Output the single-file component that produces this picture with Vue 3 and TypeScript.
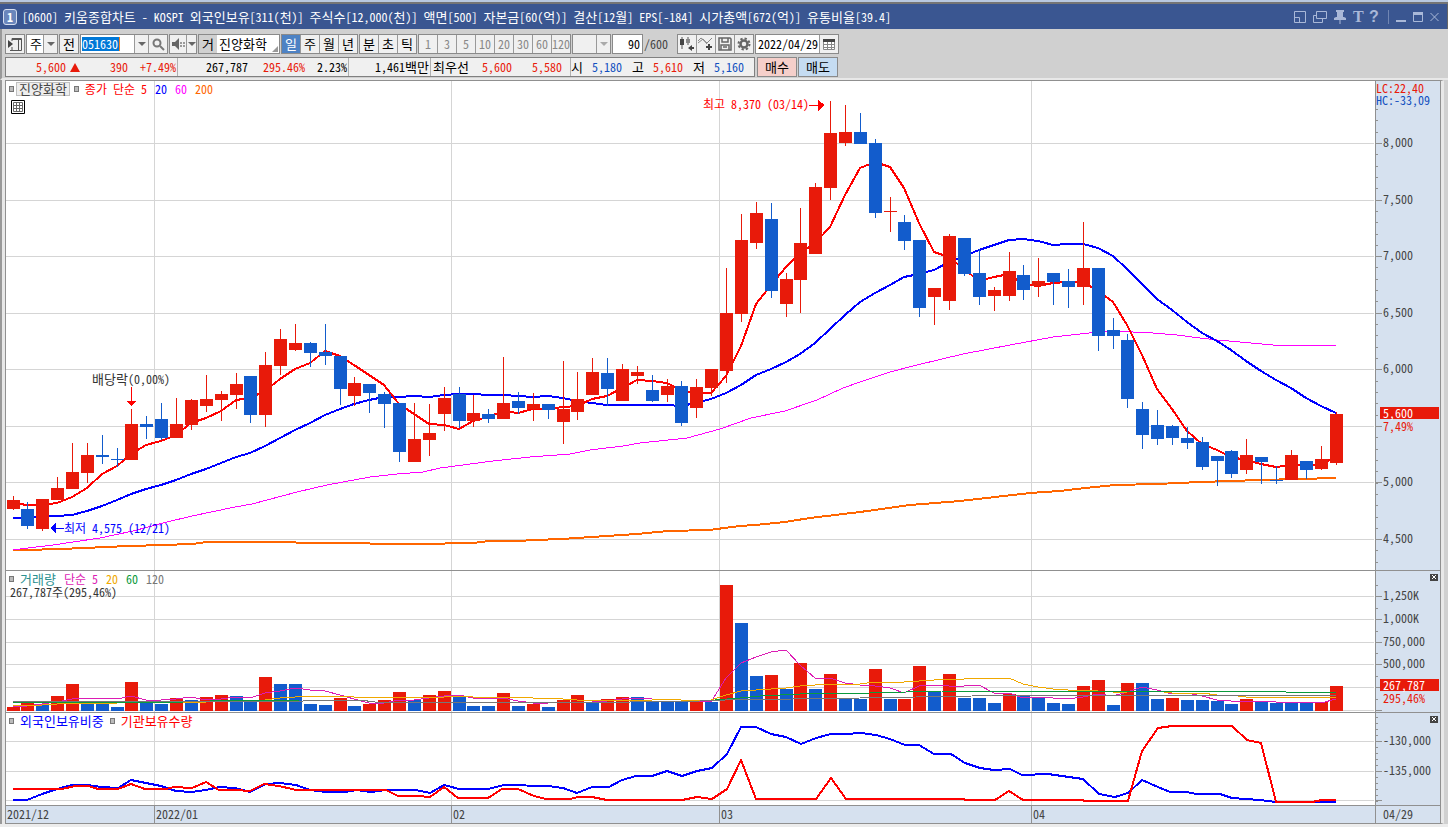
<script setup lang="ts">
type Tone = 'R' | 'B'
type Candle = [Tone, number, number, number, number]
type Point = [number, number]

// tone, body top, body bottom, high, low
const candles: Candle[] = [
  ['R', 500, 509, 496, 510], ['B', 509, 526, 502, 529], ['R', 499, 529, 499, 531], ['R', 488, 500, 477, 500],
  ['R', 472, 489, 443, 489], ['R', 455, 473, 443, 483], ['B', 455, 457, 435, 464], ['B', 459, 460, 448, 467],
  ['R', 424, 460, 409, 460], ['B', 424, 427, 416, 439], ['B', 419, 438, 403, 440], ['R', 424, 438, 398, 438],
  ['R', 400, 425, 399, 430], ['R', 399, 406, 375, 412], ['R', 394, 400, 391, 421], ['R', 384, 395, 373, 409],
  ['B', 376, 415, 376, 423], ['R', 365, 415, 352, 427], ['R', 339, 366, 329, 375], ['R', 343, 350, 324, 351],
  ['B', 343, 353, 342, 367], ['B', 352, 356, 324, 365], ['B', 356, 389, 356, 405], ['R', 383, 396, 377, 406],
  ['B', 384, 393, 384, 413], ['B', 394, 404, 392, 428], ['B', 403, 452, 403, 462], ['R', 439, 462, 403, 462],
  ['R', 433, 440, 404, 456], ['R', 398, 414, 387, 431], ['B', 394, 421, 387, 428], ['R', 413, 421, 395, 427],
  ['B', 414, 419, 409, 423], ['R', 403, 419, 357, 419], ['B', 401, 408, 392, 414], ['R', 404, 409, 393, 421],
  ['B', 404, 410, 404, 419], ['R', 409, 422, 361, 444], ['R', 399, 412, 372, 420], ['R', 372, 395, 358, 395],
  ['B', 373, 389, 358, 406], ['R', 369, 401, 364, 401], ['R', 372, 376, 366, 384], ['B', 390, 401, 375, 402],
  ['R', 386, 395, 379, 402], ['B', 386, 423, 381, 426], ['R', 387, 408, 379, 418], ['R', 369, 388, 369, 396],
  ['R', 313, 371, 268, 383], ['R', 240, 314, 214, 322], ['R', 213, 243, 202, 249], ['B', 219, 291, 203, 298],
  ['R', 279, 304, 273, 317], ['R', 243, 280, 208, 313], ['R', 187, 254, 183, 254], ['R', 133, 188, 101, 200],
  ['R', 132, 143, 105, 146], ['B', 132, 144, 113, 144], ['B', 143, 213, 139, 218], ['R', 211, 212, 197, 232],
  ['B', 222, 241, 215, 250], ['B', 240, 308, 240, 317], ['R', 288, 297, 288, 325], ['R', 236, 301, 234, 310],
  ['B', 238, 274, 238, 276], ['B', 273, 297, 249, 305], ['R', 290, 296, 287, 311], ['R', 271, 296, 252, 301],
  ['B', 275, 290, 265, 300], ['R', 281, 286, 258, 297], ['B', 273, 282, 273, 305], ['B', 281, 287, 269, 308],
  ['R', 268, 287, 222, 305], ['B', 268, 336, 268, 351], ['B', 330, 336, 318, 349], ['B', 340, 399, 334, 408],
  ['B', 409, 435, 402, 449], ['B', 425, 439, 410, 445], ['B', 426, 438, 425, 445], ['B', 438, 443, 427, 449],
  ['B', 442, 467, 437, 470], ['B', 456, 461, 456, 486], ['B', 451, 474, 450, 478], ['R', 455, 470, 439, 474],
  ['B', 457, 462, 457, 484], ['B', 480, 481, 466, 484], ['R', 455, 480, 450, 480], ['B', 461, 470, 461, 479],
  ['R', 459, 469, 446, 470], ['R', 414, 463, 412, 465],
]

const volumeTones = 'RRBRRBBBRBBRBRRBBRBBBBRBRRRBRRBBBRBRBRRBRRBBBBRBRBBRBRBRBBRBRRBRBBBRBBBBRRBRBBRBBBBRBBBBRR'
const volumes: number[] = [
  707, 703, 704, 696, 684, 704, 704, 707, 682, 703, 704, 698, 700, 697, 695, 696, 701, 677, 684, 684,
  704, 705, 698, 706, 704, 700, 692, 700, 695, 691, 696, 706, 706, 693, 706, 704, 707, 700, 695, 702,
  699, 697, 697, 701, 702, 702, 701, 702, 585, 623, 676, 675, 689, 663, 689, 674, 699, 699, 669, 699,
  699, 666, 691, 674, 698, 698, 703, 694, 695, 697, 703, 704, 686, 680, 705, 683, 683, 699, 698, 700,
  700, 701, 704, 699, 702, 703, 703, 703, 702, 686,
]

const foreignPoints: Point[] = [
  [13, 800], [27, 800], [42, 794], [57, 789], [72, 785], [87, 785], [102, 787], [118, 788], [131, 780],
  [146, 783], [161, 786], [176, 791], [191, 792], [206, 790], [219, 787], [235, 788], [250, 792], [266, 784],
  [280, 783], [296, 785], [310, 790], [326, 792], [345, 792], [357, 790], [371, 792], [386, 790], [416, 790],
  [430, 793], [444, 785], [459, 789], [488, 789], [504, 785], [548, 786], [563, 788], [577, 793], [592, 787],
  [609, 787], [622, 780], [636, 776], [652, 776], [667, 771], [682, 776], [697, 771], [712, 768], [727, 754],
  [741, 727], [756, 727], [771, 734], [786, 737], [801, 744], [816, 738], [831, 734], [846, 734], [861, 733],
  [876, 735], [890, 739], [905, 745], [919, 745], [934, 754], [951, 754], [965, 763], [980, 768], [994, 770],
  [1010, 769], [1022, 775], [1048, 774], [1083, 779], [1099, 794], [1115, 797], [1128, 793], [1142, 780],
  [1158, 787], [1170, 792], [1187, 792], [1196, 794], [1220, 794], [1232, 798], [1260, 800], [1276, 802],
  [1336, 802],
]
const institutionPoints: Point[] = [
  [13, 789], [62, 789], [75, 786], [88, 786], [98, 789], [118, 789], [131, 784], [145, 789], [166, 789],
  [174, 787], [192, 788], [206, 782], [219, 790], [235, 790], [250, 791], [264, 784], [279, 786], [296, 790],
  [386, 790], [398, 796], [418, 796], [430, 797], [444, 787], [458, 798], [488, 798], [502, 789], [518, 789],
  [534, 796], [546, 799], [570, 799], [578, 797], [592, 797], [607, 800], [682, 800], [697, 797], [712, 799],
  [727, 789], [741, 760], [756, 799], [816, 799], [831, 778], [846, 799], [964, 799], [965, 800], [995, 800],
  [1009, 791], [1023, 800], [1083, 800], [1084, 801], [1128, 801], [1142, 751], [1158, 728], [1172, 726],
  [1232, 726], [1247, 740], [1261, 743], [1276, 802], [1312, 802], [1322, 800], [1336, 800],
]

const xAt = (i: number): number => Math.floor(13.05 + i * 14.865)
const tint = (tone: string): string => (tone === 'R' ? '#e81a0a' : '#125ccc')
const toPath = (points: Point[]): string => points.map(([x, y]) => `${x},${y}`).join(' ')

function average(values: number[], span: number, seed: number[]): Point[] {
  return values.map((_, i): Point => {
    if (i < seed.length) return [xAt(i), seed[i]]
    const part = values.slice(Math.max(0, i - span + 1), i + 1)
    return [xAt(i), Math.round(part.reduce((a, b) => a + b, 0) / part.length)]
  })
}

const closes = candles.map(([tone, top, bottom]) => (tone === 'R' ? top : bottom))
const ma5 = average(closes, 5, [503, 505, 505, 503])
const ma20 = average(closes, 20, [518, 518, 517, 516, 515, 511, 506, 500, 494, 489, 485, 480, 474, 469, 463, 457, 453, 446, 438])
const ma60: Point[] = [
  [13, 550], [28, 548], [53, 545], [100, 538], [133, 531], [163, 523], [192, 516], [235, 507], [252, 504], [297, 492],
  [327, 485], [370, 477], [397, 474], [423, 472], [440, 468], [463, 465], [493, 461], [530, 457], [570, 454], [590, 450],
  [623, 446], [640, 443], [687, 438], [720, 429], [751, 418], [785, 411], [817, 400], [843, 388], [860, 382], [890, 372],
  [917, 365], [963, 354], [1010, 345], [1053, 337], [1080, 334], [1107, 331], [1133, 332], [1153, 333], [1177, 335],
  [1200, 338], [1217, 340], [1240, 342], [1273, 345], [1313, 345], [1336, 346],
]
const ma200: Point[] = [
  [13, 550], [28, 550], [57, 549], [88, 548], [103, 547], [131, 546], [162, 545], [192, 544], [207, 542], [295, 542],
  [297, 543], [369, 543], [371, 544], [444, 544], [446, 543], [473, 543], [489, 541], [518, 541], [535, 540], [562, 539],
  [592, 537], [637, 534], [668, 531], [710, 530], [724, 528], [740, 526], [755, 525], [785, 522], [810, 518], [860, 512],
  [910, 505], [960, 501], [1030, 493], [1060, 491], [1085, 488], [1115, 485], [1157, 484], [1200, 482], [1260, 480], [1336, 478],
]
const volMa5 = average(volumes, 5, [706, 706, 704, 702])
const volMa20 = average(volumes, 20, [705, 705, 705, 704, 703, 703, 703, 703, 702, 702, 702, 702, 702, 702, 701, 701, 701, 700, 698])
const volMa60: Point[] = [
  [13, 702], [183, 702], [210, 701], [300, 700], [715, 700], [740, 698], [760, 696], [800, 694], [870, 693], [942, 691],
  [1284, 691], [1286, 692], [1336, 692],
]
const volMa120: Point[] = [
  [13, 701], [303, 701], [310, 700], [360, 700], [375, 702], [630, 702], [700, 701], [725, 700], [860, 698], [972, 696],
  [1134, 695], [1336, 696],
]

const months = [154, 451, 719, 1031]
const priceGrid = [143, 200, 256, 313, 369, 426, 482, 539]
const volumeGrid = [596, 619, 642, 664, 687, 710]
const holdingGrid = [741, 771, 800]

const steps = (from: number, to: number, step: number): number[] => {
  const out: number[] = []
  for (let y = from; y <= to; y += step) out.push(Math.round(y))
  return out
}
const priceTicks = steps(109, 566, 11.32)
const volumeTicks = steps(585, 700, 22.8)
const holdingTicks = steps(717, 803, 6)

const priceLabels = [
  { y: 142, t: '8,000' }, { y: 199, t: '7,500' }, { y: 255, t: '7,000' }, { y: 312, t: '6,500' },
  { y: 368, t: '6,000' }, { y: 481, t: '5,000' }, { y: 538, t: '4,500' },
]
const volumeLabels = [{ y: 595, t: '1,250K' }, { y: 618, t: '1,000K' }, { y: 641, t: '750,000' }, { y: 663, t: '500,000' }]
const holdingLabels = [{ y: 740, t: '-130,000' }, { y: 770, t: '-135,000' }]

const inMain = (y: number): string => `${((y - 81) / 489) * 100}%`
const inVolume = (y: number): string => `${((y - 571) / 141) * 100}%`
const inHolding = (y: number): string => `${((y - 713) / 92) * 100}%`
const across = (x: number): string => `${((x - 6) / 1369) * 100}%`

const dateLabels = [
  { x: 154, t: '2022/01' }, { x: 451, t: '02' }, { x: 719, t: '03' }, { x: 1031, t: '04' },
]
const periods = ['일', '주', '월', '년']
const units = ['분', '초', '틱']
const spans = ['1', '3', '5', '10', '20', '30', '60', '120']

const title = '[0600] 키움종합차트 - KOSPI 외국인보유[311(천)] 주식수[12,000(천)] 액면[500] 자본금[60(억)] 결산[12월] EPS[-184] 시가총액[672(억)] 유통비율[39.4]'
// Hangul runs are set one size up from the half-width Latin beside them
const titleRuns = title.split(/([가-힣]+)/).map((text) => ({ text, hangul: /[가-힣]/.test(text) }))
</script>

<template>
  <main class="window">
    <div class="tabs"></div>
    <header class="title">
      <span class="badge">1</span>
      <h1><span v-for="(r, i) in titleRuns" :key="i" :class="{ ko: r.hangul }">{{ r.text }}</span></h1>
      <div class="tools">
        <button aria-label="화면 축소"><svg width="12" height="12" viewBox="0 0 12 12"><path d="M.5.5h11v11H.5zM.5 6.5h5v5" /></svg></button>
        <button aria-label="화면 복제"><svg width="14" height="12" viewBox="0 0 14 12"><path d="M3.500.5h10v7h-10zM3 4.500H.5v7h9V8" /></svg></button>
        <button aria-label="고정"><svg width="12" height="14" viewBox="0 0 12 14"><path class="solid" d="M2 0h8v2H9v5h1l2 1v2H0V8l2-1h1V2H2zM5.500 10h1v4h-1z" /></svg></button>
        <button class="glyph serif" aria-label="글꼴">T</button>
        <button class="glyph" aria-label="도움말">?</button>
        <i></i>
        <button aria-label="최소화"><svg width="10" height="12" viewBox="0 0 10 12"><path class="solid" d="M0 9h10v2H0z" /></svg></button>
        <button aria-label="최대화"><svg width="10" height="12" viewBox="0 0 10 12"><path d="M.5 1.500h9v9h-9z" /><path class="solid" d="M0 1h10v3H0z" /></svg></button>
        <button aria-label="닫기"><svg width="9" height="12" viewBox="0 0 9 12"><path d="M.5 2l8 8M8.500 2l-8 8" /></svg></button>
      </div>
    </header>

    <section class="controls">
      <div class="bar">
        <button class="box square" aria-label="패널"><svg width="14" height="14" viewBox="0 0 14 14"><path d="M4 4V1.500h9.500v12H4V10M4 2.500h9M10.500 3v10M2 13.500h3" fill="none" stroke="#555" /><path d="M0 3l5 4-5 4z" fill="#444" /></svg></button>
        <div class="box combo kind">
          <select class="ko" aria-label="종목 구분"><option>주</option></select>
          <span class="arrow"></span>
        </div>
        <button class="box square ko">전</button>
        <div class="box combo code">
          <span class="field"><input type="text" value="051630" aria-label="종목코드" /></span>
          <button class="arrow" aria-label="종목 목록"></button>
          <button class="cell" aria-label="종목 검색"><svg width="13" height="13" viewBox="0 0 13 13"><circle cx="5" cy="5" r="3.500" fill="none" stroke="#777" stroke-width="2" /><path d="M8 8l4 4" stroke="#777" stroke-width="2" /></svg></button>
        </div>
        <div class="box combo sound">
          <button class="cell" aria-label="소리"><svg width="13" height="12" viewBox="0 0 13 12"><path d="M0 4h3l4-4v12L3 8H0z" fill="#666" /><path d="M8 4h2v2H8zM11 4h2v2h-2zM8 7h2v2H8zM11 7h2v2h-2z" fill="#999" /></svg></button>
          <button class="arrow" aria-label="소리 설정"></button>
        </div>
        <div class="box combo name">
          <span class="mark ko">거</span>
          <select class="ko" aria-label="종목명"><option>진양화학</option></select>
        </div>
        <div class="group four ko">
          <button v-for="(p, i) in periods" :key="p" :class="{ on: i === 0 }">{{ p }}</button>
        </div>
        <div class="group three ko">
          <button v-for="u in units" :key="u">{{ u }}</button>
        </div>
        <div class="group faint">
          <button v-for="s in spans" :key="s">{{ s }}</button>
        </div>
        <div class="box combo blank">
          <select aria-label="사용자 주기" disabled><option></option></select>
          <span class="arrow pale"></span>
        </div>
        <input class="box bars" type="text" value="90" aria-label="봉 개수" />
        <span class="total">/600</span>
        <div class="group four">
          <button aria-label="차트 유형 추가"><svg width="16" height="16" viewBox="0 0 16 16"><path d="M3 1v12M9 1v8" stroke="#555" /><path d="M1 3h4v6H1z" fill="#444" /><path d="M7 3h4v4H7z" fill="#888" /><path d="M9 12l4-3v2h2v2h-2v2z" fill="#444" /></svg></button>
          <button aria-label="지표 추가"><svg width="16" height="16" viewBox="0 0 16 16"><path d="M0 5l3-3 6 5 5-5M0 7l5-4 4 5" stroke="#888" fill="none" /><path d="M11 8v6M8 11h6" stroke="#444" stroke-width="2" /></svg></button>
          <button aria-label="저장"><svg width="14" height="14" viewBox="0 0 14 14"><path d="M1 1h11l1 1v11H1zM4 1v4h6V1M3 13V8h8v5M5 10h4" stroke="#666" stroke-width="1.500" fill="none" /></svg></button>
          <button aria-label="설정"><svg width="14" height="14" viewBox="0 0 14 14"><circle cx="7" cy="7" r="5.500" fill="none" stroke="#666" stroke-width="2" stroke-dasharray="2.300 2" /><circle cx="7" cy="7" r="3.500" fill="none" stroke="#666" stroke-width="2.500" /></svg></button>
        </div>
        <div class="box combo date">
          <input type="text" value="2022/04/29" aria-label="기준일" />
          <button class="cell" aria-label="달력"><svg width="12" height="11" viewBox="0 0 12 11"><path d="M.5.5h11v10H.5zM0 5.500h12M0 8.500h12M4.500 3v8M8.500 3v8" stroke="#888" fill="#fff" /><path d="M0 0h12v3H0z" fill="#444" /></svg></button>
        </div>
      </div>

      <div class="bar quotes">
        <dl class="info">
          <div class="s1 up"><dd>5,600</dd><dd class="tri"></dd><dd>390</dd><dd>+7.49%</dd></div>
          <div class="s2"><dd>267,787</dd><dd class="up">295.46%</dd><dd>2.23%</dd></div>
          <div class="s3"><dd>1,461<span class="ko">백만</span></dd></div>
          <div class="s4"><dt class="ko">최우선</dt><dd class="up">5,600</dd><dd class="up">5,580</dd></div>
          <div class="s5"><dt class="ko">시</dt><dd class="down">5,180</dd><dt class="ko">고</dt><dd class="up">5,610</dd><dt class="ko">저</dt><dd class="down">5,160</dd></div>
        </dl>
        <button class="box order buy ko">매수</button>
        <button class="box order sell ko">매도</button>
      </div>
    </section>

    <section class="chart">
      <div class="plot">
        <svg viewBox="6 81 1369 489" preserveAspectRatio="none">
          <g class="grid">
            <rect v-for="x in months" :key="x" :x="x" y="81" width="1" height="489" />
            <rect v-for="y in priceGrid" :key="y" x="6" :y="y" width="1368" height="1" />
          </g>
          <g class="lines">
            <polyline :points="toPath(ma200)" stroke="#f60" stroke-width="2" />
            <polyline :points="toPath(ma60)" stroke="#f0f" />
            <polyline :points="toPath(ma20)" stroke="#00f" stroke-width="2" />
            <polyline :points="toPath(ma5)" stroke="#f00" stroke-width="2" />
          </g>
          <g v-for="(c, i) in candles" :key="i" :fill="tint(c[0])">
            <rect :x="xAt(i)" :y="c[3]" width="1" :height="Math.max(1, c[4] - c[3])" />
            <rect :x="xAt(i) - 6" :y="c[1]" width="13" :height="c[2] - c[1]" />
          </g>
          <path d="M131 387h1v14h4l-5 5-5-5h5z" fill="#f00" />
          <path d="M50 528l6-5v5h8v1h-8v5z" fill="#00f" />
          <path d="M809 105h9v-5l7 5-7 6v-5h-9z" fill="#f00" />
        </svg>
        <div class="legend">
          <i class="dot"></i><button class="stock ko">진양화학</button><i class="dot"></i>
          <span class="red gap">종가 단순 5</span><span class="blue">20</span><span class="pink">60</span><span class="orange">200</span>
        </div>
        <button class="sheet" aria-label="데이터 표"><svg width="14" height="14" viewBox="0 0 14 14"><path d="M.5.500h13v13H.5z" fill="#fff" stroke="#000" /><path d="M2.500 2.500h9v9h-9zM2 5.500h10M2 8.500h10M5.500 2v10M8.500 2v10" fill="none" stroke="#666" /></svg></button>
        <span class="note dark" :style="{ left: across(92), top: inMain(379) }"><span class="ko">배당락</span>(0,00%)</span>
        <span class="note blue" :style="{ left: across(64), top: inMain(528) }">최저 4,575 (12/21)</span>
        <span class="note red" :style="{ left: across(703), top: inMain(104) }">최고 8,370 (03/14)</span>
      </div>
      <div class="axis">
        <svg viewBox="1376 81 64 489" preserveAspectRatio="none">
          <g class="ticks">
            <rect v-for="y in priceTicks" :key="y" x="1376" :y="y" width="2" height="1" />
            <rect v-for="y in priceGrid" :key="'m' + y" x="1376" :y="y" width="6" height="1" />
          </g>
        </svg>
        <span class="bound up" :style="{ top: inMain(88) }">LC:22,40</span>
        <span class="bound down" :style="{ top: inMain(100) }">HC:-33,09</span>
        <span v-for="l in priceLabels" :key="l.t" class="level" :style="{ top: inMain(l.y) }">{{ l.t }}</span>
        <span class="level up" :style="{ top: inMain(426) }">7,49%</span>
        <strong :style="{ top: inMain(413) }">5,600</strong>
      </div>

      <div class="plot">
        <svg viewBox="6 571 1369 141" preserveAspectRatio="none">
          <g class="grid">
            <rect v-for="x in months" :key="x" :x="x" y="571" width="1" height="141" />
            <rect v-for="y in volumeGrid" :key="y" x="6" :y="y" width="1368" height="1" />
          </g>
          <rect v-for="(v, i) in volumes" :key="i" :x="xAt(i) - 6" :y="v" width="13" :height="711 - v" :fill="tint(volumeTones[i])" />
          <g class="lines">
            <polyline :points="toPath(volMa5)" stroke="#dc1cb4" />
            <polyline :points="toPath(volMa20)" stroke="#f0a800" />
            <polyline :points="toPath(volMa60)" stroke="#0a9a3c" />
            <polyline :points="toPath(volMa120)" stroke="#777" />
          </g>
        </svg>
        <div class="legend low">
          <i class="dot"></i><span class="teal first ko">거래량</span><span class="magenta">단순 5</span><span class="amber">20</span><span class="green">60</span><span class="grey">120</span>
        </div>
        <span class="volume-now">267,787주(295,46%)</span>
      </div>
      <div class="axis">
        <svg viewBox="1376 571 64 141" preserveAspectRatio="none">
          <g class="ticks">
            <rect v-for="y in volumeTicks" :key="y" x="1376" :y="y" width="2" height="1" />
            <rect v-for="y in volumeGrid" :key="'m' + y" x="1376" :y="y" width="6" height="1" />
          </g>
        </svg>
        <span v-for="l in volumeLabels" :key="l.t" class="level" :style="{ top: inVolume(l.y) }">{{ l.t }}</span>
        <span class="level up" :style="{ top: inVolume(698) }">295,46%</span>
        <strong :style="{ top: inVolume(685) }">267,787</strong>
        <button class="shut" aria-label="거래량 닫기"><svg width="8" height="7" viewBox="0 0 8 7"><path d="M2 1l4 4M6 1L2 5" stroke="#fff" /></svg></button>
      </div>

      <div class="plot">
        <svg viewBox="6 713 1369 92" preserveAspectRatio="none">
          <g class="grid">
            <rect v-for="x in months" :key="x" :x="x" y="713" width="1" height="92" />
            <rect v-for="y in holdingGrid" :key="y" x="6" :y="y" width="1368" height="1" />
          </g>
          <g class="lines">
            <polyline :points="toPath(foreignPoints)" stroke="#00f" stroke-width="2" />
            <polyline :points="toPath(institutionPoints)" stroke="#f00" stroke-width="2" />
          </g>
        </svg>
        <div class="legend low holding ko">
          <i class="dot"></i><span class="blue">외국인보유비중</span><i class="dot"></i><span class="red">기관보유수량</span>
        </div>
      </div>
      <div class="axis">
        <svg viewBox="1376 713 64 92" preserveAspectRatio="none">
          <g class="ticks">
            <rect v-for="y in holdingTicks" :key="y" x="1376" :y="y" width="2" height="1" />
            <rect v-for="y in holdingGrid" :key="'m' + y" x="1376" :y="y" width="6" height="1" />
          </g>
        </svg>
        <span v-for="l in holdingLabels" :key="l.t" class="level" :style="{ top: inHolding(l.y) }">{{ l.t }}</span>
        <button class="shut" aria-label="보유 지표 닫기"><svg width="8" height="7" viewBox="0 0 8 7"><path d="M2 1l4 4M6 1L2 5" stroke="#fff" /></svg></button>
      </div>

      <div class="dates">
        <span>2021/12</span>
        <span v-for="d in dateLabels" :key="d.t" class="month" :style="{ left: across(d.x) }">{{ d.t }}</span>
      </div>
      <div class="today">04/29</div>
    </section>
    <footer></footer>
  </main>
</template>

<style>
html,
body {
  margin: 0;
  background: #d0d0d0;
}
</style>

<style scoped>
* {
  box-sizing: border-box;
}
.window {
  display: grid;
  grid-template-rows: 4px 25px 51px minmax(600px, 1fr) 3px;
  height: 100vh;
  min-height: 683px;
  min-width: 900px;
  overflow: hidden;
  background: #d0d0d0;
  color: #000;
  font: 12px/18px "Noto Sans Mono CJK KR", "Noto Sans CJK KR", sans-serif;
  white-space: nowrap;
}
button,
input,
select {
  margin: 0;
  padding: 0;
  border: 0;
  border-radius: 0;
  background: none;
  color: inherit;
  font: inherit;
  appearance: none;
  outline: 0;
}
.ko {
  font-size: 13px;
}
svg {
  display: block;
}
.tabs {
  background: #b8c8e0;
  border-bottom: 2px solid #757575;
}
.title {
  display: flex;
  align-items: center;
  padding: 0 8px 0 3px;
  background: #3a5691;
  border-right: 1px solid #666;
  color: #fff;
}
.badge {
  width: 14px;
  height: 16px;
  border: 1px solid #d5def0;
  border-radius: 3px;
  background: #6a86bc;
  font-weight: bold;
  line-height: 13px;
  text-align: center;
}
h1 {
  flex: 1;
  min-width: 0;
  margin: 0 0 0 5px;
  font-size: 12px;
  font-weight: normal;
  overflow: hidden;
}
.tools {
  display: flex;
  align-items: center;
  gap: 7px;
  color: #a9b8d8;
}
.tools button {
  display: grid;
  place-items: center;
}
.tools path {
  fill: none;
  stroke: #a9b8d8;
}
.tools .solid {
  fill: #a9b8d8;
  stroke: none;
}
.tools i {
  width: 1px;
  height: 14px;
  margin-left: 3px;
  background: #7186b3;
}
.tools .glyph {
  width: 9px;
  font: bold 16px/16px "Liberation Sans", sans-serif;
}
.tools .serif {
  font-family: "Liberation Serif", serif;
}
.controls {
  display: flex;
  flex-direction: column;
  gap: 3px;
  padding: 5px 5px 0 3px;
  border-bottom: 2px solid #e8e8e8;
  border-left: 2px solid #999;
}
.bar {
  display: flex;
  gap: 1px;
  height: 20px;
}
.box {
  border: 1px solid #8a8a8a;
  background: #f0f0f0;
}
.square {
  width: 20px;
  display: grid;
  place-items: center;
}
.combo {
  display: flex;
  background: #fff;
  overflow: hidden;
}
.arrow {
  flex: 0 0 14px;
  border-left: 1px solid #999;
  background: #f0f0f0;
  display: grid;
  place-items: center;
}
.arrow::after {
  content: "";
  border: 4px solid transparent;
  border-top-color: #666;
  border-bottom: 0;
}
.pale::after {
  border-top-color: #aaa;
}
.cell {
  flex: 0 0 19px;
  border-left: 1px solid #999;
  background: #f0f0f0;
  display: grid;
  place-items: center;
}
.kind {
  width: 32px;
}
.kind select {
  width: 17px;
  padding-left: 3px;
}
.code {
  width: 88px;
}
.field {
  flex: 1;
  padding: 1px;
}
.field input {
  display: block;
  width: 38px;
  height: 14px;
  margin-top: 1px;
  border-right: 1px solid #f08020;
  background: #0078d7;
  color: #fff;
}
.sound {
  width: 28px;
}
.sound .cell {
  flex: 1;
  border: 0;
}
.sound .arrow {
  flex-basis: 10px;
}
.name {
  position: relative;
  width: 82px;
}
.name::after {
  content: "";
  position: absolute;
  right: 1px;
  bottom: 1px;
  border: 3px solid #999;
  border-top-color: transparent;
  border-left-color: transparent;
}
.mark {
  width: 18px;
  background: #d0d0d0;
  text-align: center;
}
.name select {
  padding-left: 2px;
}
.group {
  display: flex;
  border: 1px solid #8a8a8a;
  background: #f0f0f0;
}
.group button {
  flex: 1 1 0;
  min-width: 0;
  display: grid;
  place-items: center;
}
.group button + button {
  border-left: 1px solid #999;
}
.group .on {
  background: #4d82c4;
  color: #fff;
}
.four {
  width: 77px;
}
.three {
  width: 58px;
}
.faint {
  width: 153px;
  color: #888;
}
.blank {
  width: 39px;
  background: #f0f0f0;
}
.blank select {
  flex: 1;
}
.bars {
  width: 31px;
  padding-right: 2px;
  background: #fff;
  text-align: right;
}
.total {
  width: 32px;
  padding-top: 1px;
  color: #444;
}
.date {
  width: 84px;
}
.date input {
  flex: 1;
  width: 62px;
  padding-left: 2px;
}
.info {
  display: grid;
  grid-template-columns: 171px 171px 82px 140px 184px;
  margin: 0;
  border: 1px solid #808080;
  background: #f0f0f0;
}
.info > div {
  display: flex;
  padding-right: 1px;
}
.info > div + div {
  border-left: 1px solid #b0b0b0;
}
.info dd,
.info dt {
  margin: 0;
  text-align: right;
}
.s1,
.s2,
.s3 {
  justify-content: flex-end;
}
.s1 dd:nth-child(3),
.s1 dd:nth-child(4) {
  width: 48px;
}
.info .tri {
  align-self: center;
  margin-left: 4px;
  border: 5px solid transparent;
  border-top: 0;
  border-bottom: 9px solid #e81a0a;
}
.s2 dd:nth-child(2) {
  width: 57px;
}
.s2 dd:nth-child(3) {
  width: 42px;
}
.s4 {
  padding-left: 2px;
}
.s4 dd:nth-child(2) {
  width: 43px;
}
.s4 dd:nth-child(3) {
  width: 50px;
}
.s5 dd {
  width: 39px;
}
.s5 dd + dt {
  width: 22px;
}
.up {
  color: #e81a0a;
}
.down {
  color: #1250c0;
}
.order {
  width: 40px;
}
.buy {
  margin-left: 1px;
  background: #f5cfca;
}
.sell {
  background: #c5dcf2;
}
.chart {
  display: grid;
  grid-template-columns: minmax(0, 1fr) 66px;
  grid-template-rows: minmax(0, 490fr) minmax(0, 142fr) minmax(0, 93fr) 17px;
  margin: 0 4px 0 5px;
  border: 1px solid #909090;
  border-right: 3px solid #e8e8e8;
  box-shadow: -3px 0 #e8e8e8, -6px 0 #999;
  line-height: 12px;
}
.plot,
.axis {
  position: relative;
  border-bottom: 1px solid #909090;
  background: #fff;
  min-height: 0;
}
.axis,
.today {
  border-left: 1px solid #909090;
  border-right: 1px solid #909090;
  background: #d6e1ef;
  color: #444;
}
.plot > svg,
.axis > svg {
  width: 100%;
  height: 100%;
  shape-rendering: crispEdges;
}
.grid {
  fill: #d5d5d5;
}
.ticks {
  fill: #909090;
}
.lines {
  fill: none;
}
.legend {
  position: absolute;
  top: 1px;
  left: 3px;
  display: flex;
  align-items: center;
  height: 14px;
  gap: 8px;
}
.legend.low {
  top: 2px;
  height: 12px;
}
.legend.holding {
  gap: 6px;
}
.dot {
  width: 5px;
  height: 6px;
  border: 1px solid #777;
  background: #bbb;
}
.stock {
  height: 14px;
  margin: 0 -4px 0 -6px;
  padding: 0 2px;
  border: 1px solid #c0c0c0;
  background: #eee;
  color: #444;
}
.first,
.gap {
  margin-left: -2px;
}
.sheet {
  position: absolute;
  top: 19px;
  left: 5px;
}
.note,
.bound,
.level,
.axis strong {
  position: absolute;
  transform: translateY(-50%);
}
.volume-now {
  position: absolute;
  top: 15px;
  left: 4px;
  color: #333;
}
.bound {
  left: 0;
}
.level {
  left: 7px;
}
.axis strong {
  left: 4px;
  right: 1px;
  padding-left: 3px;
  background: #e81a0a;
  color: #fff;
  font-weight: normal;
}
.shut {
  position: absolute;
  top: 3px;
  right: 2px;
  background: #444;
}
.red { color: #f00; }
.blue { color: #00f; }
.pink { color: #f0f; }
.orange { color: #f60; }
.teal { color: #2a9090; }
.magenta { color: #dc1cb4; }
.amber { color: #f0a800; }
.green { color: #0a9a3c; }
.grey { color: #777; }
.dark { color: #333; }
.dates {
  position: relative;
  padding: 2px 1px;
  background: #d6e1ef;
  color: #444;
}
.month {
  position: absolute;
  top: 0;
  bottom: 0;
  padding: 2px 0 0 1px;
  border-left: 1px solid #909090;
}
.today {
  padding: 2px 7px;
}
footer {
  background: #ececec;
}
</style>
